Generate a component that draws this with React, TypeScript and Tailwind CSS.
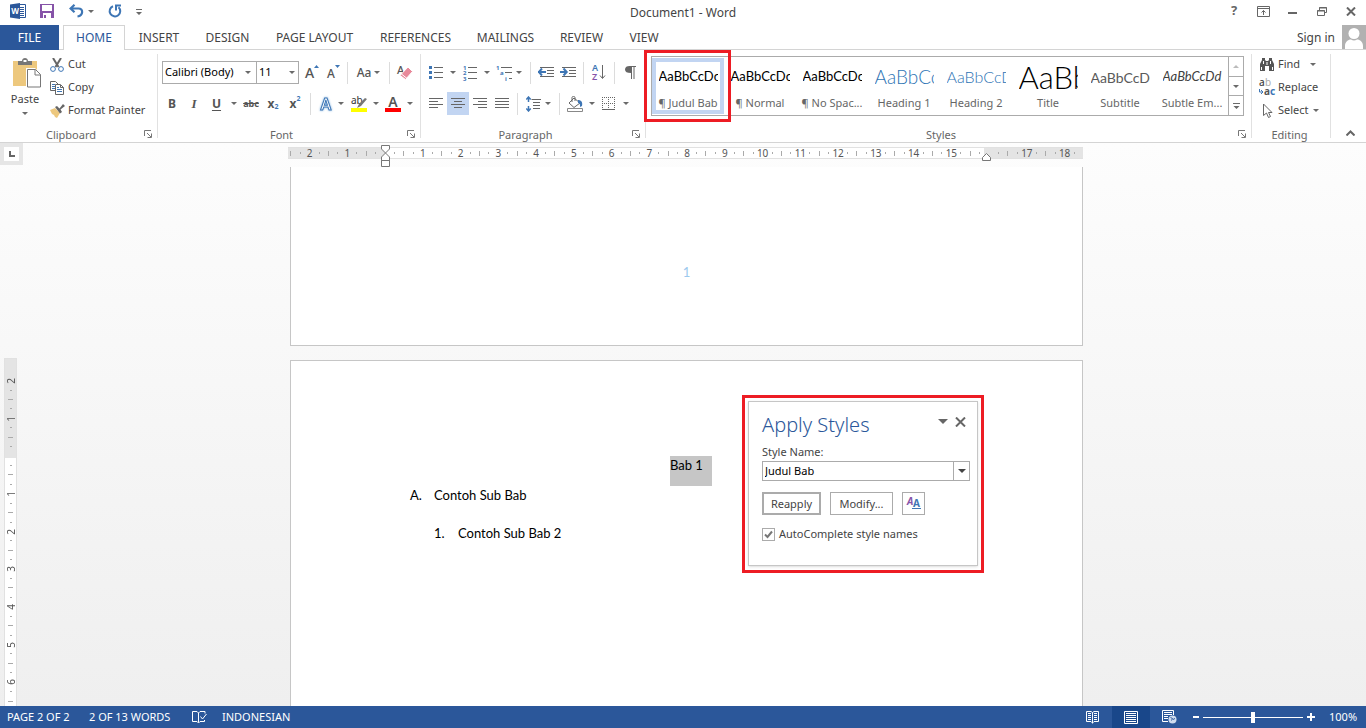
import type { ReactNode } from "react";
import { clsx } from "clsx";

const TABS = [
  { label: "INSERT", width: "w-[68px]" },
  { label: "DESIGN", width: "w-[69px]" },
  { label: "PAGE LAYOUT", width: "w-[105px]" },
  { label: "REFERENCES", width: "w-[97px]" },
  { label: "MAILINGS", width: "w-[83px]" },
  { label: "REVIEW", width: "w-[69px]" },
  { label: "VIEW", width: "w-[56px]" },
];

const STYLES = [
  { name: "¶ Judul Bab", sample: "AaBbCcDc", look: "text-[13px] text-black", selected: true },
  { name: "¶ Normal", sample: "AaBbCcDc", look: "text-[13px] text-black" },
  { name: "¶ No Spac...", sample: "AaBbCcDc", look: "text-[13px] text-black" },
  { name: "Heading 1", sample: "AaBbCcDc", look: "text-[19px] font-light text-[#2e74b5]" },
  { name: "Heading 2", sample: "AaBbCcDc", look: "text-[16px] font-light text-[#2e74b5]" },
  { name: "Title", sample: "AaBbC", look: "text-[31px] font-light text-black" },
  { name: "Subtitle", sample: "AaBbCcDd", look: "text-[14px] text-[#5a5a5a]" },
  { name: "Subtle Em...", sample: "AaBbCcDd", look: "text-[13px] italic text-[#404040]" },
];

function Caret({ className = "" }: { className?: string }) {
  return (
    <svg width="6" height="3" viewBox="0 0 6 3" className={clsx("shrink-0", className)} aria-hidden="true">
      <path d="M0 0h6L3 3z" fill="#6a6a6a" />
    </svg>
  );
}

function CaretButton({ label, className }: { label: string; className: string }) {
  return (
    <button aria-label={label} className={clsx("flex h-[22px] shrink-0 items-center justify-center", className)}>
      <Caret />
    </button>
  );
}

function Tool({ label, className = "w-[22px]", children }: { label: string; className?: string; children: ReactNode }) {
  return (
    <button
      aria-label={label}
      title={label}
      className={clsx("flex h-[23px] shrink-0 items-center justify-center text-[#555]", className)}
    >
      {children}
    </button>
  );
}

function Divider({ className = "mx-1" }: { className?: string }) {
  return <span className={clsx("h-[22px] w-px shrink-0 bg-[#dcdcdc]", className)} />;
}

function Group({ title, className, launcher = true, children }: {
  title: string;
  className: string;
  launcher?: boolean;
  children: ReactNode;
}) {
  return (
    <section className={clsx("relative flex flex-col pt-[3px]", className)}>
      <div className="h-[72px]">{children}</div>
      <div className="flex h-[17px] items-center pr-1">
        <h2 className="flex-1 pt-[2px] text-center text-[11px] leading-4 text-[#666]">{title}</h2>
        {launcher && (
          <button aria-label={`${title} settings`} className="flex w-3 justify-center pt-px">
            <svg width="8" height="8" viewBox="0 0 8 8" fill="none" stroke="#777">
              <path d="M.5 6V.5H7M3 3l4 4M7.5 3.5v4h-4" />
            </svg>
          </button>
        )}
      </div>
      <span className="absolute top-1 right-0 h-[84px] w-px bg-[#e1e1e1]" />
    </section>
  );
}

function WordLogo() {
  return (
    <svg width="16" height="16" viewBox="0 0 16 16" aria-label="Word" role="img">
      <path d="M8 1.5h7.5v13H8z" fill="#fff" stroke="#2b579a" />
      <path d="M9 4.5h5M9 6.5h5M9 8.5h5M9 10.5h5M9 12.5h5" stroke="#2b579a" />
      <path d="M0 1.6 10 0v16L0 14.4z" fill="#2b579a" />
      <text x="5" y="11" fontSize="8" fontWeight="700" textAnchor="middle" fill="#fff">W</text>
    </svg>
  );
}

function TitleBar() {
  return (
    <header className="flex h-[25px] shrink-0 items-center text-[#444]">
      <div className="flex h-full flex-1 items-center pb-[3px] pl-[10px]">
        <WordLogo />
        <button aria-label="Save" className="ml-[14px]">
          <svg width="14" height="14" viewBox="0 0 14 14">
            <path d="M0 0h14v14H0z" fill="#8653a8" />
            <path d="M2 1h10v6H2zM3 9h8v5H3z" fill="#fff" />
            <path d="M4 11h2v3H4z" fill="#8653a8" />
          </svg>
        </button>
        <button aria-label="Undo" className="ml-[15px]">
          <svg width="15" height="14" viewBox="0 0 15 14" fill="none" stroke="#3e76b5" strokeWidth="2.2">
            <path d="M1.5 4.5h8c5 0 5 7-1 8M5.5.8 1.6 4.5l3.9 3.7" />
          </svg>
        </button>
        <button aria-label="Undo history" className="ml-1"><Caret /></button>
        <button aria-label="Repeat" className="ml-[14px]">
          <svg width="14" height="14" viewBox="0 0 14 14" fill="none" stroke="#3e76b5" strokeWidth="2">
            <path d="M5 2.2A5.3 5.3 0 1 0 10.500 3.2" />
            <path d="M8 6.500V1.500h5" />
          </svg>
        </button>
        <button aria-label="Customize Quick Access Toolbar" className="ml-[14px] pt-[2px]">
          <svg width="6" height="6" viewBox="0 0 6 6">
            <path d="M0 0h6v1H0zM0 3h6L3 6z" fill="#6a6a6a" />
          </svg>
        </button>
      </div>
      <h1 className="text-[12px]">Document1 - Word</h1>
      <div className="flex h-full flex-1 items-center justify-end pr-[10px] pb-[3px] text-[#666]">
        <button className="w-[10px] text-[13px] font-bold" aria-label="Help">?</button>
        <button aria-label="Ribbon Display Options" className="ml-[18px]">
          <svg width="13" height="11" viewBox="0 0 13 11" fill="none" stroke="#666">
            <path d="M.5.5h12v10H.5zM.5 2.500h12M6.500 9V4.500M4.500 6.500l2-2 2 2" />
          </svg>
        </button>
        <button aria-label="Minimize" className="ml-[18px] pt-[4px]">
          <svg width="9" height="2"><path d="M0 0h9v2H0z" fill="#666" /></svg>
        </button>
        <button aria-label="Restore Down" className="ml-[20px]">
          <svg width="10" height="9" viewBox="0 0 10 9" fill="none" stroke="#666">
            <path d="M.5 3.500h7v5h-7zM0 4h8M2.500 3V.5h7v5H8M2 1h8" />
          </svg>
        </button>
        <button aria-label="Close" className="ml-[19px]">
          <svg width="10" height="9" viewBox="0 0 10 9" stroke="#666" strokeWidth="2">
            <path d="m1 .5 8 8M9 .5l-8 8" />
          </svg>
        </button>
      </div>
    </header>
  );
}

function TabStrip() {
  return (
    <nav className="flex h-[25px] shrink-0 text-[12px] text-[#444]">
      <button className="w-[59px] bg-[#2b579a] text-white">FILE</button>
      <span className="w-1 border-b border-[#d4d4d4]" />
      <button className="w-[62px] border border-b-0 border-[#d4d4d4] text-[#2b579a]">HOME</button>
      {TABS.map((tab) => (
        <button key={tab.label} className={clsx("border-b border-[#d4d4d4] pt-[2px]", tab.width)}>
          {tab.label}
        </button>
      ))}
      <div className="flex flex-1 items-center justify-end border-b border-[#d4d4d4]">
        <a href="#signin" className="mr-[7px] pt-px">Sign in</a>
        <svg width="24" height="24" viewBox="0 0 24 24" aria-label="Account picture" role="img">
          <path d="M0 0h24v24H0z" fill="#b1b1b1" />
          <circle cx="12" cy="8.500" r="5.500" fill="#fff" />
          <path d="M3 24v-3c0-4 3-6.500 6-6.500 2 1.300 4 1.300 6 0 3 0 6 2.500 6 6.500v3z" fill="#fff" />
        </svg>
      </div>
    </nav>
  );
}

function ClipboardGroup() {
  return (
    <Group title="Clipboard" className="w-[158px]">
      <div className="flex">
        <button className="flex w-[50px] flex-col items-center pt-[5px] text-[11px] leading-4 text-[#444]">
          <svg width="28" height="30" viewBox="0 0 28 30" className="ml-1" aria-hidden="true">
            <path d="M0 3h24v25H0z" fill="#edc87e" />
            <path d="M5 7V3h4c0-4 6-4 6 0h4v4z" fill="#777" />
            <path d="M10.500 2h3v2h-3z" fill="#fff" />
            <path d="M13 10h9l6 6v14H13z" fill="#fff" />
            <path d="M14.500 11.500h8l5 5v12.500h-13zM22 11.500V17h5.500" fill="#fff" stroke="#777" />
          </svg>
          <span className="mt-[3px] mb-[5px]">Paste</span>
          <Caret />
        </button>
        <div className="flex flex-col items-start text-[11px] text-[#444]">
          <button className="flex h-[23px] items-center gap-[4px]">
            <svg width="14" height="14" viewBox="0 0 14 14" fill="none" aria-hidden="true">
              <path d="m3 0 5.500 9M11 0 5.500 9" stroke="#666" strokeWidth="2" />
              <circle cx="3" cy="11" r="2.400" stroke="#3e76b5" />
              <circle cx="11" cy="11" r="2.400" stroke="#3e76b5" />
            </svg>
            Cut
          </button>
          <button className="flex h-[23px] items-center gap-[4px]">
            <svg width="14" height="14" viewBox="0 0 14 14" fill="none" aria-hidden="true">
              <path d="M.5.5h5l3 3v6h-8z" fill="#fff" stroke="#666" />
              <path d="M2 3.500h3M2 5.500h3M2 7.500h3" stroke="#3e76b5" />
              <path d="M5.500 3.500h5l3 3v7h-8z" fill="#fff" stroke="#666" />
              <path d="M10.500 4v2.500h3" stroke="#666" />
              <path d="M7 6.500h2M7 8.500h5M7 10.500h5" stroke="#3e76b5" />
            </svg>
            Copy
          </button>
          <button className="flex h-[23px] items-center gap-[3px]">
            <svg width="15" height="14" viewBox="0 0 15 14" aria-hidden="true">
              <path d="m0 6 5-2 5 5-3 5-2-1-1-2-2-1z" fill="#edc87e" />
              <path d="m5 3 2-1 2.500 2.500L13 0l2 2-4.500 3.500L12 8l-2 1.500z" fill="#666" />
            </svg>
            Format Painter
          </button>
        </div>
      </div>
    </Group>
  );
}

function FontGroup() {
  return (
    <Group title="Font" className="w-[263px]">
      <div className="flex flex-col gap-2 pt-2 pl-1">
        <div className="flex h-[23px] items-center">
          <span className="relative flex items-center">
            <select
              aria-label="Font"
              className="h-[23px] w-[95px] appearance-none border border-[#ababab] px-[2px] text-[11px] text-black"
            >
              <option>Calibri (Body)</option>
            </select>
            <Caret className="pointer-events-none absolute right-[6px]" />
          </span>
          <span className="relative -ml-px flex items-center">
            <select
              aria-label="Font size"
              className="h-[23px] w-[43px] appearance-none border border-[#ababab] px-[2px] text-[11px] text-black"
            >
              <option>11</option>
            </select>
            <Caret className="pointer-events-none absolute right-[4px]" />
          </span>
          <Tool label="Increase Font Size" className="w-[25px] pl-px">
            <span className="text-[14px] font-medium">A</span>
            <svg width="5" height="3" viewBox="0 0 5 3" className="mb-3"><path d="M0 3h5L2.500 0z" fill="#3e76b5" /></svg>
          </Tool>
          <Tool label="Decrease Font Size" className="w-[19px]">
            <span className="pt-[2px] text-[12px] font-medium">A</span>
            <svg width="5" height="3" viewBox="0 0 5 3" className="mb-3"><path d="M0 0h5L2.500 3z" fill="#3e76b5" /></svg>
          </Tool>
          <Divider />
          <Tool label="Change Case" className="w-[33px] gap-[3px]">
            <span className="text-[12px] font-medium">Aa</span>
            <Caret />
          </Tool>
          <Divider />
          <Tool label="Clear All Formatting">
            <svg width="16" height="16" viewBox="0 0 16 16" className="overflow-visible" aria-hidden="true">
              <text x="0" y="9" fontSize="11" fontWeight="500" fill="#555">A</text>
              <path d="m11 2 4.500 4.500-7 8L3 10.500z" fill="#e8899a" stroke="#fff" />
              <path d="m4.500 9 5.500 4.500" stroke="#fff" />
            </svg>
          </Tool>
        </div>
        <div className="flex h-[23px] items-center">
          <Tool label="Bold" className="w-[20px] text-[12px] font-bold">B</Tool>
          <Tool label="Italic" className="w-[24px] font-['Liberation_Serif',serif] text-[13px] font-bold italic">I</Tool>
          <Tool label="Underline" className="w-[21px] text-[12px] font-bold underline underline-offset-2">U</Tool>
          <CaretButton label="Underline style" className="w-[13px]" />
          <Tool label="Strikethrough" className="w-[22px] text-[9px] font-bold line-through">abc</Tool>
          <Tool label="Subscript" className="w-[22px] text-[12px] font-bold">
            x<span className="pt-2 text-[7px] text-[#3e76b5]">2</span>
          </Tool>
          <Tool label="Superscript" className="w-[22px] text-[12px] font-bold">
            x<span className="pb-2 text-[7px] text-[#3e76b5]">2</span>
          </Tool>
          <Divider />
          <Tool label="Text Effects">
            <svg
              width="16"
              height="16"
              viewBox="0 0 16 16"
              className="overflow-visible drop-shadow-[0_0_1px_#7fb2e0]"
              aria-hidden="true"
            >
              <text x="8" y="14" fontSize="16" fontWeight="600" textAnchor="middle" fill="#fff" stroke="#3e76b5">A</text>
            </svg>
          </Tool>
          <CaretButton label="Text effects menu" className="mr-[3px] w-2" />
          <Tool label="Text Highlight Color">
            <svg width="16" height="16" viewBox="0 0 16 16" className="overflow-visible" aria-hidden="true">
              <text x="0" y="8" fontSize="10" fill="#333">ab</text>
              <path d="m14 2 2 1-6 7-4 2 2-4z" fill="#777" />
              <path d="M0 12h16v4H0z" fill="#ff0" />
            </svg>
          </Tool>
          <CaretButton label="Highlight colors" className="w-3" />
          <Tool label="Font Color">
            <svg width="16" height="16" viewBox="0 0 16 16" className="overflow-visible" aria-hidden="true">
              <text x="8" y="11" fontSize="14" fontWeight="600" textAnchor="middle" fill="#555">A</text>
              <path d="M0 12h16v4H0z" fill="red" />
            </svg>
          </Tool>
          <CaretButton label="Font colors" className="w-3" />
        </div>
      </div>
    </Group>
  );
}

function AlignIcon({ d }: { d: string }) {
  return (
    <svg width="14" height="11" viewBox="0 0 14 11" stroke="#666" aria-hidden="true">
      <path d={d} />
    </svg>
  );
}

function ParagraphGroup() {
  return (
    <Group title="Paragraph" className="w-[225px]">
      <div className="flex flex-col gap-2 pt-2 pl-1">
        <div className="flex h-[23px] items-center">
          <Tool label="Bullets">
            <svg width="14" height="15" viewBox="0 0 14 15" aria-hidden="true">
              <path d="M0 1h3v3H0zM0 6h3v3H0zM0 11h3v3H0z" fill="#3e76b5" />
              <path d="M5 2.500h9M5 7.500h9M5 12.500h9" stroke="#666" />
            </svg>
          </Tool>
          <CaretButton label="Bullet library" className="w-3" />
          <Tool label="Numbering">
            <svg width="14" height="16" viewBox="0 0 14 16" className="overflow-visible" aria-hidden="true">
              <g fill="#3e76b5" fontSize="6" fontWeight="700">
                <text x="0" y="5">1</text>
                <text x="0" y="10">2</text>
                <text x="0" y="16">3</text>
              </g>
              <path d="M5 2.500h9M5 7.500h9M5 13.500h9" stroke="#666" />
            </svg>
          </Tool>
          <CaretButton label="Numbering library" className="w-3" />
          <Tool label="Multilevel List">
            <svg width="17" height="16" viewBox="0 0 17 16" className="overflow-visible" aria-hidden="true">
              <g fill="#3e76b5" fontSize="6" fontWeight="700">
                <text x="0" y="5">1</text>
                <text x="4" y="10">a</text>
                <text x="9" y="16">i</text>
              </g>
              <path d="M5 2.500h11M9 7.500h7M13 13.500h3" stroke="#666" />
            </svg>
          </Tool>
          <CaretButton label="List library" className="w-2" />
          <Divider className="mr-1 ml-[7px]" />
          <Tool label="Decrease Indent">
            <svg width="17" height="11" viewBox="0 0 17 11" aria-hidden="true">
              <path d="M2 .5h14M9 3.500h7M9 6.500h7M2 9.500h14" stroke="#666" />
              <path d="M0 5h8M4 1.500.8 5 4 8.500" fill="none" stroke="#3e76b5" strokeWidth="2" />
            </svg>
          </Tool>
          <Tool label="Increase Indent">
            <svg width="17" height="11" viewBox="0 0 17 11" aria-hidden="true">
              <path d="M2 .5h14M9 3.500h7M9 6.500h7M2 9.500h14" stroke="#666" />
              <path d="M0 5h7M3.500 1.500 6.700 5 3.500 8.500" fill="none" stroke="#3e76b5" strokeWidth="2" />
            </svg>
          </Tool>
          <Divider />
          <Tool label="Sort">
            <svg width="14" height="17" viewBox="0 0 14 17" className="overflow-visible" aria-hidden="true">
              <text x="0" y="7" fontSize="9" fontWeight="600" fill="#3e76b5">A</text>
              <text x="0" y="16" fontSize="9" fontWeight="600" fill="#8653a8">Z</text>
              <path d="M10.500 1v13M8 11.500l2.500 3 2.500-3" fill="none" stroke="#666" />
            </svg>
          </Tool>
          <Divider />
          <Tool label="Show paragraph marks">
            <svg width="11" height="13" viewBox="0 0 11 13" aria-hidden="true">
              <path d="M11 0v1H9.500v12h-1V1H7v12H6V7C2 7 0 6 0 3.500S2 0 4.500 0z" fill="#666" />
            </svg>
          </Tool>
        </div>
        <div className="flex h-[23px] items-center">
          <Tool label="Align Left"><AlignIcon d="M0 .5h14M0 3.500h9M0 6.500h14M0 9.500h9" /></Tool>
          <Tool label="Center" className="w-[22px] bg-[#c2d5f2]"><AlignIcon d="M0 .5h14M3 3.500h8M0 6.500h14M3 9.500h8" /></Tool>
          <Tool label="Align Right"><AlignIcon d="M0 .5h14M5 3.500h9M0 6.500h14M5 9.500h9" /></Tool>
          <Tool label="Justify"><AlignIcon d="M0 .5h14M0 3.500h14M0 6.500h14M0 9.500h14" /></Tool>
          <Divider />
          <Tool label="Line Spacing">
            <svg width="15" height="16" viewBox="0 0 15 16" aria-hidden="true">
              <path d="M5.500 3.500H15M7 6.500h7M7 9.500h7M7 12.500h7" stroke="#666" />
              <path d="M2.500 1v5M2.500 10v5M.3 3.500 2.500 1l2.200 2.500M.3 12.500 2.500 15l2.200-2.500" fill="none" stroke="#3e76b5" strokeWidth="1.500" />
            </svg>
          </Tool>
          <CaretButton label="Line spacing options" className="w-2" />
          <Divider className="mr-1 ml-[7px]" />
          <Tool label="Shading">
            <svg width="16" height="16" viewBox="0 0 16 16" fill="none" aria-hidden="true">
              <path d="m2 7 5-5 6 5-6 4.500zM5 6V1.500C5 0 8 0 8 1.500V5" stroke="#666" />
              <path d="M11 4c3 0 5 2 4 6l-2 1c0-3 0-4-2-4z" fill="#3e76b5" />
              <path d="M.5 12.500h15v3H.5z" stroke="#888" />
            </svg>
          </Tool>
          <CaretButton label="Shading colors" className="w-3" />
          <Tool label="Borders">
            <svg width="14" height="14" viewBox="0 0 14 14" fill="none" stroke="#666" aria-hidden="true">
              <path d="M0 .5h13M0 6.500h13M.5 0v12M6.500 0v12M12.500 0v12" strokeDasharray="1 1" />
              <path d="M0 12.500h13" />
            </svg>
          </Tool>
          <CaretButton label="Border options" className="w-3" />
        </div>
      </div>
    </Group>
  );
}

function StylesGroup() {
  return (
    <Group title="Styles" className="min-w-0 flex-1">
      <div className="relative mt-[3px] mr-2 ml-[5px] flex h-[60px] border border-[#ababab]">
        <div className="flex min-w-0 flex-1 overflow-hidden">
          {STYLES.map((style) => (
            <button
              key={style.name}
              className={clsx(
                "my-px flex w-[72px] shrink-0 flex-col items-center",
                style.selected && "shadow-[inset_0_0_0_4px_#c2d5f2]"
              )}
            >
              <span
                className={clsx(
                  "flex h-[37px] w-[59px] items-center overflow-hidden pt-px font-['Lato',sans-serif] whitespace-nowrap",
                  style.look
                )}
              >
                {style.sample}
              </span>
              <span className="text-[11px] leading-4 whitespace-nowrap text-[#666]">{style.name}</span>
            </button>
          ))}
        </div>
        <div className="flex w-[15px] flex-col divide-y divide-[#ababab] border-l border-[#ababab]">
          <button aria-label="Previous row" className="flex flex-1 items-center justify-center">
            <svg width="6" height="3" viewBox="0 0 6 3"><path d="M0 3h6L3 0z" fill="#bbb" /></svg>
          </button>
          <button aria-label="Next row" className="flex flex-1 items-center justify-center"><Caret /></button>
          <button aria-label="More styles" className="flex flex-1 items-center justify-center">
            <svg width="7" height="6" viewBox="0 0 7 6"><path d="M0 0h7v1H0zM.5 3h6l-3 3z" fill="#6a6a6a" /></svg>
          </button>
        </div>
        <span className="pointer-events-none absolute -top-[7px] -left-[8px] h-[72px] w-[87px] border-3 border-[#ed1c24]" />
      </div>
    </Group>
  );
}

function EditingGroup() {
  return (
    <Group title="Editing" className="w-[79px]" launcher={false}>
      <div className="flex flex-col items-start pl-[7px] text-[11px] text-[#444]">
        <button className="flex h-[23px] items-center">
          <svg width="16" height="13" viewBox="0 0 16 13" className="mr-[3px]" aria-hidden="true">
            <path d="M3 0h3v2l1 1h2l1-1V0h3v2l2 4v7h-5V8H6v5H1V6l2-4z" fill="#555" />
            <path d="M4.500 3v3M11.500 3v3M2.500 9v3M13.500 9v3M8 4v3" stroke="#fff" />
          </svg>
          Find
          <Caret className="ml-[10px]" />
        </button>
        <button className="flex h-[23px] items-center">
          <svg width="16" height="16" viewBox="0 0 16 16" className="mr-[3px] overflow-visible" aria-hidden="true">
            <text x="0" y="6" fontSize="10" fontWeight="500" fill="#444">a</text>
            <text x="6" y="6" fontSize="10" fill="#aaa">b</text>
            <text x="5" y="15" fontSize="10" fontWeight="700" fill="#555">a</text>
            <text x="11" y="15" fontSize="10" fontWeight="700" fill="#3e76b5">c</text>
            <path d="M.5 9v3H3M2 10l2 2-2 2" fill="none" stroke="#3e76b5" />
          </svg>
          Replace
        </button>
        <button className="flex h-[23px] items-center">
          <svg width="16" height="16" viewBox="0 0 16 16" className="mr-[3px]" aria-hidden="true">
            <path d="M4.500 1v11.500l3-2.500 2 4.500 2-1-2-4h3.500z" fill="#fff" stroke="#666" />
          </svg>
          Select
          <Caret className="ml-1" />
        </button>
      </div>
    </Group>
  );
}

function tickLabel(cell: number, origin: number, hidden: number[]) {
  const value = (cell - origin) / 4;
  return hidden.includes(value) ? "" : String(Math.abs(value));
}

function HorizontalRuler() {
  return (
    <div className="relative -ml-[2px] h-3 w-[795px] border-y border-[#e1e1e1] bg-[linear-gradient(to_right,#e4e4e4_97px,#fff_97px,#fff_696px,#e4e4e4_696px)]">
      <div className="mr-1 -ml-[2px] flex h-[10px] text-[10px] leading-[10px] text-[#555]">
        {Array.from({ length: 84 }).map((_, i) => (
          <span key={i} className="flex min-w-0 flex-1 items-center justify-center">
            {i % 4 === 2 ? (
              tickLabel(i, 10, [0, 16])
            ) : (
              <span className={clsx("w-px shrink-0 bg-[#aaa]", i % 4 === 0 ? "h-[5px]" : "h-[2px]")} />
            )}
          </span>
        ))}
      </div>
      <svg width="9" height="22" viewBox="0 0 9 22" className="absolute -top-[3px] left-[93px]" fill="#fff" stroke="#777" aria-hidden="true">
        <path d="M.5.5h8v3.500l-4 4-4-4zM.5 15.500V12l4-4 4 4v3.500zM.5 15.500h8v6h-8z" />
      </svg>
      <svg width="9" height="8" viewBox="0 0 9 8" className="absolute top-[5px] left-[694px]" fill="#fff" stroke="#777" aria-hidden="true">
        <path d="M.5 7.500V4.500l4-4 4 4v3z" />
      </svg>
    </div>
  );
}

function VerticalRuler() {
  return (
    <div className="mt-[193px] ml-1 flex w-[13px] flex-1 flex-col overflow-hidden border border-b-0 border-[#e1e1e1] bg-[linear-gradient(to_bottom,#e4e4e4_99px,#fff_99px)] pt-[17px]">
      <div className="flex h-[330px] shrink-0 flex-col text-[10px] leading-[10px] text-[#555]">
        {Array.from({ length: 35 }).map((_, i) => (
          <span key={i} className="flex min-h-0 flex-1 items-center justify-center">
            {i % 4 === 0 ? (
              <span className="rotate-180 [writing-mode:vertical-rl]">{tickLabel(i, 8, [0])}</span>
            ) : (
              <span className={clsx("h-px shrink-0 bg-[#aaa]", i % 4 === 2 ? "w-[5px]" : "w-[2px]")} />
            )}
          </span>
        ))}
      </div>
    </div>
  );
}

function ApplyStylesPane() {
  return (
    <aside className="absolute top-[34px] left-[451px] w-[242px] border-3 border-[#ed1c24] bg-white p-[3px] pb-1 font-['Noto_Sans',sans-serif]">
      <div className="border border-[#c6c6c6] pt-[8px] pr-[7px] pb-[23px] pl-[13px] text-[11px] text-[#444] shadow-sm">
        <div className="flex items-center">
          <h2 className="flex-1 text-[20px] leading-[30px] font-light text-[#2b579a]">Apply Styles</h2>
          <button aria-label="Pane options" className="mb-[7px]">
            <svg width="10" height="5" viewBox="0 0 10 5"><path d="M0 0h10L5 5z" fill="#666" /></svg>
          </button>
          <button aria-label="Close pane" className="mr-1 mb-[7px] ml-[7px]">
            <svg width="11" height="10" viewBox="0 0 11 10" stroke="#666" strokeWidth="2"><path d="m1 .5 9 9M10 .5l-9 9" /></svg>
          </button>
        </div>
        <label htmlFor="style-name" className="mt-1 block leading-4">Style Name:</label>
        <div className="relative mt-px flex items-center">
          <select
            id="style-name"
            className="h-[20px] w-full appearance-none border border-[#ababab] px-[2px] pb-px text-[11px] text-black"
          >
            <option>Judul Bab</option>
          </select>
          <span className="pointer-events-none absolute right-0 flex h-[20px] w-[17px] items-center justify-center border-l border-[#ababab]">
            <svg width="8" height="4" viewBox="0 0 8 4"><path d="M0 0h8L4 4z" fill="#444" /></svg>
          </span>
        </div>
        <div className="mt-[11px] flex items-center gap-[9px]">
          <button className="h-[23px] w-[59px] border-2 border-[#ababab]">Reapply</button>
          <button className="h-[23px] w-[63px] border border-[#ababab]">Modify...</button>
          <button aria-label="Styles window" className="flex h-[23px] w-[23px] items-center justify-center border border-[#ababab]">
            <svg width="14" height="13" viewBox="0 0 14 13" className="overflow-visible" aria-hidden="true">
              <text x="0" y="8" fontSize="10" fontWeight="700" fontStyle="italic" fill="#8653a8">A</text>
              <text x="6" y="10" fontSize="10" fontWeight="700" fill="#3e76b5">A</text>
              <path d="M5 11.500h9" stroke="#3e76b5" />
            </svg>
          </button>
        </div>
        <label className="mt-[11px] flex items-center gap-1 leading-4">
          <span className="relative flex">
            <input type="checkbox" defaultChecked className="h-[13px] w-[13px] appearance-none border border-[#ababab]" />
            <svg width="13" height="13" viewBox="0 0 13 13" className="pointer-events-none absolute" fill="none" stroke="#777" strokeWidth="2">
              <path d="m3 6.500 2.500 2.500L10 3.500" />
            </svg>
          </span>
          AutoComplete style names
        </label>
      </div>
    </aside>
  );
}

function Workspace() {
  return (
    <main className="flex min-h-0 flex-1 overflow-hidden bg-linear-to-b from-[#fdfdfd] to-[#efefef]">
      <div className="flex w-[23px] flex-col">
        <button aria-label="Left tab" className="flex h-[22px] w-[23px] shrink-0 items-center justify-center border-4 border-[#e6e6e6] bg-white">
          <svg width="6" height="6" viewBox="0 0 6 6"><path d="M0 0h2v4h4v2H0z" fill="#666" /></svg>
        </button>
        <VerticalRuler />
      </div>
      <div className="flex min-w-0 flex-1 justify-center pr-4">
        <div className="flex w-[793px] shrink-0 flex-col pt-1">
          <HorizontalRuler />
          <article className="mt-2 h-[179px] shrink-0 border border-t-0 border-[#c6c6c6] bg-white pt-[96px] text-center font-['Lato',sans-serif] text-[13px] leading-[18px] text-[#9cc9ee]">
            1
          </article>
          <article className="relative mt-[14px] flex-1 border border-b-0 border-[#c6c6c6] bg-white px-[95px] pt-[95px] font-['Lato',sans-serif] text-[13px] leading-[18px] text-black">
            <p className="flex justify-center pl-[9px]">
              <span className="h-[30px] w-[42px] bg-[#c6c6c6]">Bab 1</span>
            </p>
            <ol className="pl-6">
              <li className="flex"><span className="w-6">A.</span>Contoh Sub Bab</li>
              <li className="mt-5 flex pl-6"><span className="w-6">1.</span>Contoh Sub Bab 2</li>
            </ol>
            <ApplyStylesPane />
          </article>
        </div>
      </div>
    </main>
  );
}

function StatusBar() {
  return (
    <footer className="flex h-[22px] shrink-0 items-center bg-[#2b579a] pl-[7px] text-[11px] text-white">
      <span className="w-[82px]">PAGE 2 OF 2</span>
      <span className="w-[103px]">2 OF 13 WORDS</span>
      <button aria-label="Proofing errors" className="w-[30px]">
        <svg width="15" height="13" viewBox="0 0 15 13" fill="none" stroke="#fff" aria-hidden="true">
          <path d="M6.500 11.500V2L5 .5H.5v10h4.500l1.500 1.500L8 10.500h4.500V9M6.500 2 8 .5h5v2M8.500 5.500l2 2.500 4-5" />
        </svg>
      </button>
      <span>INDONESIAN</span>
      <div className="ml-auto flex h-full items-center">
        <button aria-label="Read Mode" className="flex w-[39px] justify-center">
          <svg width="13" height="13" viewBox="0 0 13 13" fill="none" stroke="#fff" aria-hidden="true">
            <path d="M6.500 12.500V1.500M6.500 1.500 5 .5H.5v10H5l1.500 1.500L8 10.500h4.500V.5H8zM2 2.500h3M2 4.500h3M2 6.500h3M2 8.500h3M8 2.500h3M8 4.500h3M8 6.500h3M8 8.500h3" />
          </svg>
        </button>
        <button aria-label="Print Layout" className="flex h-full w-[38px] items-center justify-center bg-[#19478a]">
          <svg width="14" height="13" viewBox="0 0 14 13" fill="none" stroke="#fff" aria-hidden="true">
            <path d="M.5.5h13v12H.5zM2 2.500h10M2 4.500h10M2 6.500h10M2 8.500h10M2 10.500h10" />
          </svg>
        </button>
        <button aria-label="Web Layout" className="flex w-[39px] justify-center">
          <svg width="15" height="14" viewBox="0 0 15 14" fill="none" stroke="#fff" aria-hidden="true">
            <path d="M6 11.500H.5V.5h11V5M2 2.500h8M2 4.500h8M2 6.500h4M2 8.500h4" />
            <circle cx="10.500" cy="9.500" r="4" fill="#cfdcee" stroke="none" />
            <path d="M8.500 7.500l2 1-1 2M12.500 8l-1 2" stroke="#2b579a" />
          </svg>
        </button>
        <button aria-label="Zoom out" className="ml-[4px]">
          <svg width="6" height="2"><path d="M0 0h6v2H0z" fill="#fff" /></svg>
        </button>
        <input
          type="range"
          aria-label="Zoom"
          className="ml-1 h-[11px] w-[100px] appearance-none bg-[linear-gradient(#fff,#fff)] bg-[length:100%_1px] bg-center bg-no-repeat [&::-webkit-slider-thumb]:h-[11px] [&::-webkit-slider-thumb]:w-1 [&::-webkit-slider-thumb]:appearance-none [&::-webkit-slider-thumb]:bg-white"
        />
        <button aria-label="Zoom in" className="ml-1">
          <svg width="8" height="8"><path d="M3 0h2v3h3v2H5v3H3V5H0V3h3z" fill="#fff" /></svg>
        </button>
        <span className="ml-[14px] w-[37px]">100%</span>
      </div>
    </footer>
  );
}

export default function App() {
  return (
    <div className="flex h-screen flex-col overflow-hidden bg-white font-['Noto_Sans',sans-serif]">
      <TitleBar />
      <TabStrip />
      <div className="flex h-[93px] shrink-0 border-b border-[#d4d4d4]">
        <ClipboardGroup />
        <FontGroup />
        <ParagraphGroup />
        <StylesGroup />
        <EditingGroup />
        <div className="flex w-[35px] items-end justify-center pb-[6px] pl-1">
          <button aria-label="Collapse the Ribbon">
            <svg width="9" height="6" viewBox="0 0 9 6" fill="none" stroke="#666" strokeWidth="2"><path d="m.5 5.500 4-4 4 4" /></svg>
          </button>
        </div>
      </div>
      <Workspace />
      <StatusBar />
    </div>
  );
}
